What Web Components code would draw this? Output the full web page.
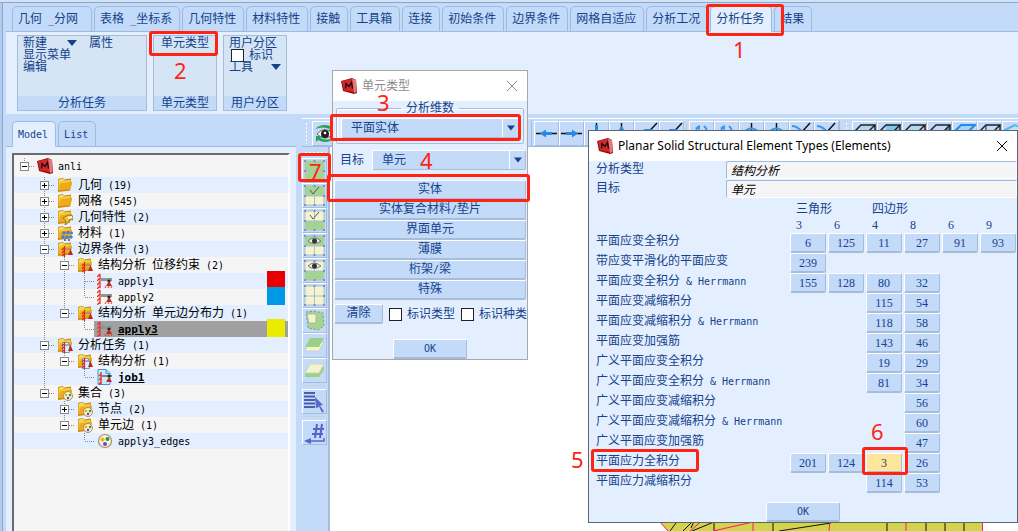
<!DOCTYPE html>
<html lang="zh-CN">
<head>
<meta charset="utf-8">
<title>anli</title>
<style>
  html, body { margin: 0; height: 100%; }
  body {
    --ink: #15428b;
    --bar: #c3daf9;
    --pane: #e3efff;
    --edge: #9bbbe3;
    --shade: #a6bcd8;
    --mark: #ff2314;
    --mono: "DejaVu Sans Mono", "Noto Sans CJK SC", monospace;
    font: 12px/16px "Liberation Serif", "Noto Sans CJK SC", sans-serif;
    color: var(--ink);
    background: var(--bar);
    overflow: hidden;
  }
</style>
</head>
<body>
<marc-app></marc-app>

<script>
// ---------- icons ----------
const folder = '<path d="M1 2l5-1 1 1.500 7-1v4l1 0-2 8-12 1.500z" fill="#c98a12"/><path d="M1.500 3l5-1 1 1.500 6-.8v8l-12 2z" fill="#f4cf3c"/><path d="M3 6.500l12-2-1.500 7.500-12 1.500z" fill="#f0a91c"/><path d="M2 3.500l4-1" stroke="#fff3a0"/>';
const support = '<path d="M7.500 5v11M5 9l2-2M5 12l2-2M5 15l2-2" stroke="#e02418" stroke-width="1.200"/><path d="M8 8h6" stroke="#8b9297" stroke-width="1.500"/><path d="M13.500 8l2.500 6h-5z" fill="#c3261c"/>';
const cubeTop = '<path d="M2 9l6-6h14l-6 6zM2 9v12M16 9v12h-14M22 3v12l-6 6" fill="none" stroke="#222" stroke-width="1.500"/>';
const mesh = (top, bottom) => `<rect x="2" y="2" width="19" height="10" fill="${top}"/><rect x="2" y="12" width="19" height="9" fill="${bottom}"/><path d="M2 2h19v19h-19zM11.500 2v19M2 12h19" fill="none" stroke="#a9c0d0"/><path d="M1 1h2v2h-2zM10.500 1h2v2h-2zM20 1h2v2h-2zM1 11h2v2h-2zM20 11h2v2h-2zM1 20h2v2h-2zM10.500 20h2v2h-2zM20 20h2v2h-2z" fill="#7f93bd"/>`;
const eye = '<path d="M5 7q6-6 13 0q-7 5-13 0z" fill="#eee" stroke="#777"/><circle cx="11.500" cy="7" r="2.500" fill="#333"/>';
const tick = '<path d="M7 6l3 4 6-7" fill="none" stroke="#555"/>';
const green = '#a3d58c', cream = '#f6f3cf';

const icons = {
  marc: [16, '<path d="M0 3l11-3 4 2 1 13-3 1-11-3z" fill="#9c1014"/><path d="M1 3l10-2 2 13-10-2z" fill="#d8272b"/><path d="M11 1l4 1 .5 12-2.500 1z" fill="#e8787a"/><path d="M4.500 10.500l.5-5 3 3 2.500-4 1 6" fill="none" stroke="#111" stroke-width="1.400"/>'],
  folder: [16, folder],
  prop: [16, folder + '<path d="M6 9l5-3 5 1v4l-3-1-2 4-3 2 1-4z" fill="#e8c53c" stroke="#8a6a14" stroke-width=".8"/><path d="M11 9l4-1" stroke="#fff" stroke-width="2"/>'],
  material: [16, folder + '<g fill="#3f7fd0"><circle cx="7" cy="8" r="1.700"/><circle cx="11" cy="7.500" r="1.700"/><circle cx="14.500" cy="8" r="1.500"/><circle cx="6" cy="12" r="1.700"/><circle cx="10" cy="12" r="1.700"/><circle cx="14" cy="12" r="1.700"/><circle cx="8" cy="15" r="1.200"/><circle cx="12" cy="15" r="1.200"/></g>'],
  bc: [16, folder + support],
  job: [16, folder + '<path d="M5.500 5.500h5l2 2v8h-7z" fill="#d9efff" stroke="#58a3d8"/>' + support],
  set: [16, folder + '<circle cx="11" cy="11" r="4.500" fill="#f5edd2" stroke="#ae8f57"/><circle cx="9" cy="10" r="1.200" fill="#d6b400"/><circle cx="13" cy="10" r="1.200" fill="#2c9a2c"/><circle cx="11" cy="13" r="1.200" fill="#6440c8"/>'],
  apply: [16, '<path d="M3 1v14M0 4l3-3M0 8l3-3M0 12l3-3M0 16l3-3" stroke="#e8362a" stroke-width="1.300"/><path d="M4 5h11v3h-11z" fill="#8d9599"/><circle cx="12" cy="8" r="1.600" fill="#222"/><path d="M12 8l3 5h-6z" fill="#c3261c"/><path d="M8 15l1-2M11 15l1-2M14 15l1-2" stroke="#e8362a"/>'],
  jobfile: [16, '<path d="M1 .5h8l4 4v11h-12z" fill="#cdeaff" stroke="#3f98d8"/><path d="M9 .5v4h4" fill="none" stroke="#3f98d8"/><path d="M4 3v13M2 7l2-2M2 11l2-2M2 15l2-2" stroke="#e8362a" stroke-width="1.500"/><path d="M5 7h10" stroke="#7f868a" stroke-width="2"/><circle cx="12" cy="7" r="1.500" fill="#222"/><path d="M12 8l3 5h-6z" fill="#c3261c"/>'],
  edges: [16, '<circle cx="8" cy="8" r="6.500" fill="#f7f2e0" stroke="#a59066" stroke-width="1.200"/><circle cx="5.500" cy="6.500" r="2" fill="#e2b90c"/><circle cx="10.500" cy="6" r="2" fill="#2b9a2f"/><circle cx="8" cy="11" r="2" fill="#6747d2"/>'],
  close: [10, '<path d="M0 0l10 10M10 0l-10 10" stroke="currentColor"/>'],
  down: [10, '<path d="M0 2h10l-5 6z" fill="currentColor"/>'],
  view: [23, '<path d="M4 12q8-9 16 0q-8 8-16 0z" fill="#fff" stroke="#666"/><circle cx="12" cy="12" r="4" fill="#222"/><circle cx="12" cy="11" r="1.300" fill="#fff"/><path d="M2 7q8-7 17-2l2-2v6h-6l2-2q-7-3-15 0z" fill="#2f9f57"/><path d="M22 16q-8 7-17 2l-2 2v-6h6l-2 2q7 3 15 0z" fill="#2f9f57"/>'],
  left: [23, '<path d="M1 11.500h21" stroke="#111" stroke-width="1.500"/><path d="M5 11.500l6-4v2.500h6v3h-6v2.500z" fill="#2788e6"/>'],
  right: [23, '<path d="M1 11.500h21" stroke="#111" stroke-width="1.500"/><path d="M18 11.500l-6-4v2.500h-6v3h6v2.500z" fill="#2788e6"/>'],
  vdown: [23, '<path d="M11.500 1v21" stroke="#111" stroke-width="1.500"/><path d="M10 3h3v8h-3z" fill="#2788e6"/>'],
  vup: [23, '<path d="M11.500 1v21" stroke="#111" stroke-width="1.500"/><path d="M11.500 4l4 6h-8z" fill="#2788e6"/>'],
  diag: [23, '<path d="M22 1l-19 20" stroke="#111" stroke-width="1.500"/><path d="M9 7l9 0-7 7z" fill="#2788e6"/>'],
  rotate: [23, '<path d="M9 4q-6 5 0 13M14 4q6 5 0 13" fill="none" stroke="#3f97ea" stroke-width="2"/><path d="M5 6l5-3v5z" fill="#3f97ea"/>'],
  spin: [23, '<path d="M11.500 1v21" stroke="#111" stroke-width="1.500"/><path d="M3 11q8-9 17 0" fill="none" stroke="#3f97ea" stroke-width="2"/>'],
  tilt: [23, '<path d="M20 1l-18 20" stroke="#111" stroke-width="1.500"/><path d="M2 4q6 0 13 9" fill="none" stroke="#3f97ea" stroke-width="2"/>'],
  cube: [23, '<path d="M2 9l6-6h14l-6 6z" fill="#acd9f5"/>' + cubeTop],
  cubeBack: [23, '<path d="M8 3h14v9h-14z" fill="#7fc6f0"/>' + cubeTop],
  cubeSide: [23, '<path d="M16 9l6-6v12l-6 6z" fill="#3fa6e6"/>' + cubeTop],
  cubeFront: [23, '<path d="M2 9l6-6h14l-6 6z" fill="#9fd6fb" stroke="#2788e6" stroke-width="2"/><path d="M2 9v12h14v-12" fill="none" stroke="#222"/>'],
  cubeWire: [23, cubeTop + '<path d="M8 3v12l-6 6" fill="none" stroke="#222"/>'],
  iso: [23, '<path d="M2 8l10-5 10 5-10 5z" fill="#bfe4fa" stroke="#55b5ef" stroke-width="2"/>'],
  meshAll: [23, mesh(green, green)],
  meshTickTop: [23, mesh(green, cream) + tick],
  meshTickBottom: [23, mesh(cream, green) + tick],
  meshEyeTop: [23, mesh(green, cream) + eye],
  meshEyeBottom: [23, mesh(cream, green) + eye],
  meshNone: [23, mesh(cream, cream)],
  meshPick: [23, '<path d="M3 3l8-1 9 2 1 13-6 4-10-2z" fill="#a3d58c" stroke="#7695a8" stroke-dasharray="2 2"/><path d="M4 5h9v9h-7z" fill="#f6f3cf" stroke="#aab9a5"/>'],
  sheetTop: [23, '<path d="M6 8l15 0-5 9h-14z" fill="#f6f3cf" stroke="#ccc"/><path d="M7 4h14l-5 9h-14z" fill="#9bd186"/>'],
  sheetBottom: [23, '<path d="M6 8h15v3l-5 7h-14v-3z" fill="#9bd186"/><path d="M7 5h14l-5 9h-14z" fill="#f4f3cd" stroke="#c8d8b4"/>'],
  list: [23, '<path d="M1 3h11M1 6.500h11M1 10h11M1 13.500h11M1 17h11" stroke="#4d5cae" stroke-width="2"/><path d="M12 7l8 8-3 .5 4 6-2 1-3-6-3 2z" fill="#5a66c8"/>'],
  hash: [23, '<path d="M14 3l-2 14M19 3l-2 14M10 8h11M9 13h11" stroke="#5663cf" stroke-width="2"/><path d="M21 17v3h-15" fill="none" stroke="#5663cf" stroke-width="1.500"/><path d="M1 20l7-3v6z" fill="#5663cf"/>']
};

const svg = (name) => {
  const [size, body] = icons[name];
  return `<svg width="${size}" height="${size}" viewBox="0 0 ${size} ${size}" fill="none" aria-hidden="true">${body}</svg>`;
};

// latin runs are set half as wide as the chinese glyphs
const mixed = (text) => text.replace(/[\x20-\x7e]+/g, (run) => `<span class="latin">${run.replace('&', '&amp;')}</span>`);

const base = `
  * { box-sizing: border-box; }
  svg { display: block; flex: none; }
  button, input, select { font: inherit; color: inherit; margin: 0; padding: 0; border: 0; background: none; border-radius: 0; }
  .latin { font: 10px/1 var(--mono); white-space: pre; }
`;

class Base extends HTMLElement {
  constructor() {
    super();
    this.attachShadow({ mode: 'open' });
  }
  connectedCallback() {
    this.shadowRoot.innerHTML = `<style>${base}${this.css()}</style>${this.html()}`;
  }
  attr(name) { return this.getAttribute(name) || ''; }
}

// ---------- small parts ----------
class PushButton extends Base {
  css() { return `
    :host { display: block; }
    button {
      display: block; width: 100%; height: 20px; line-height: 17px; text-align: center; white-space: nowrap;
      background: var(--face, var(--bar)); border: 1px solid; border-width: 1px 1px 2px 1px;
      border-color: #fff var(--shade) var(--shade) #fff; border-radius: 2px;
    }`; }
  html() { return `<button type="button">${mixed(this.attr('label'))}</button>`; }
}

class NumButton extends Base {
  css() { return `
    :host { display: block; }
    button {
      display: block; width: 100%; height: 20px; line-height: 16px; text-align: center;
      background: var(--face, var(--bar)); border: 1px solid; border-width: 1px 1px 2px 1px;
      border-color: #fff var(--shade) var(--shade) #fff; border-radius: 2px;
    }`; }
  html() { return `<button type="button">${this.attr('label')}</button>`; }
}

class CheckBox extends Base {
  css() { return `
    :host { display: block; }
    label { display: flex; align-items: center; gap: 5px; white-space: nowrap; line-height: var(--row, 16px); height: var(--row, 16px); }
    input { appearance: none; width: 13px; height: 13px; background: #fff; border: 1px solid #222; flex: none; }`; }
  html() { return `<label><input type="checkbox">${this.attr('label')}</label>`; }
}

class DropDown extends Base {
  css() { return `
    :host { display: block; flex: 1; }
    .box { display: flex; height: 20px; background: var(--bar); border: 1px solid; border-color: #fff var(--shade) var(--shade) #fff; border-radius: 2px; }
    select { appearance: none; flex: 1; min-width: 0; padding-left: 9px; outline: 0; }
    .arrow { display: grid; place-items: center; width: 16px; border-left: 1px solid #fff; pointer-events: none; }
    svg { width: 8px; height: 8px; }`; }
  html() { return `<div class="box"><select aria-label="${this.attr('name')}"><option>${this.attr('value')}</option></select><span class="arrow">${svg('down')}</span></div>`; }
}

class ToolButton extends Base {
  css() { return `
    :host { display: block; flex: none; }
    button { display: block; width: 25px; height: 25px; background: var(--bar); border: 1px solid; border-color: #fff var(--shade) var(--shade) #fff; }`; }
  html() { return `<button type="button" aria-label="${this.attr('icon')}">${svg(this.attr('icon'))}</button>`; }
}

class TabStrip extends Base {
  css() { return `
    :host { display: block; }
    nav { display: flex; gap: 2px; height: 26px; padding-left: 6px; border-bottom: 1px solid var(--edge); }
    button {
      height: 26px; padding: 0 7px 0 5px; white-space: pre; line-height: 24px;
      border: 1px solid var(--edge); border-radius: 5px 5px 0 0; background: var(--bar); flex: none;
    }
    button.on { background: var(--pane); border-bottom-color: var(--pane); }`; }
  html() {
    const on = this.attr('current');
    return `<nav>${this.attr('tabs').split('|').map((t) =>
      `<button type="button" class="${t === on ? 'on' : ''}">${mixed(t)}</button>`).join('')}</nav>`;
  }
}

class RibbonGroup extends Base {
  css() { return `
    :host { display: flex; flex-direction: column; height: 76px; background: #d5e5f5; border: 1px solid var(--shade); }
    .body { flex: 1; padding: 1px 5px; }
    footer { height: 14px; line-height: 14px; text-align: center; background: var(--bar); }`; }
  html() { return `<div class="body"><slot></slot></div><footer>${this.attr('label')}</footer>`; }
}

class RibbonItem extends Base {
  css() { return `
    :host { display: block; }
    button { display: flex; align-items: center; justify-content: space-between; width: 100%; height: 12px; line-height: 12px; white-space: nowrap; }`; }
  html() { return `<button type="button">${this.attr('label')}${this.hasAttribute('menu') ? svg('down') : ''}</button>`; }
}

// ---------- ribbon ----------
class RibbonBar extends Base {
  css() { return `
    :host { display: block; padding-top: 3px; }
    .groups { display: flex; gap: 6px; height: 82px; padding: 3px 11px; background: var(--pane); }
    .one { width: 130px; } .two { width: 64px; } .three { width: 64px; }
    .line { display: flex; gap: 12px; }
    .line ribbon-item:first-child { width: 54px; }
    .center { width: 48px; margin: 0 auto; }
    check-box { --row: 12px; margin-left: 2px; }`; }
  html() { return `
    <tab-strip current="分析任务" tabs="几何 _分网 |表格 _坐标系|几何特性|材料特性|接触|工具箱|连接|初始条件|边界条件|网格自适应|分析工况|分析任务|结果"></tab-strip>
    <div class="groups">
      <ribbon-group class="one" label="分析任务">
        <div class="line"><ribbon-item label="新建" menu></ribbon-item><ribbon-item label="属性"></ribbon-item></div>
        <ribbon-item label="显示菜单"></ribbon-item>
        <ribbon-item label="编辑"></ribbon-item>
      </ribbon-group>
      <ribbon-group class="two" label="单元类型">
        <ribbon-item class="center" label="单元类型"></ribbon-item>
      </ribbon-group>
      <ribbon-group class="three" label="用户分区">
        <ribbon-item label="用户分区"></ribbon-item>
        <check-box label="标识"></check-box>
        <ribbon-item label="工具" menu></ribbon-item>
      </ribbon-group>
    </div>`; }
}

// ---------- model tree ----------
// guides, one letter for each level: p/m box with a line below it, P/M last box,
// l line, t leaf, e last leaf, . nothing
const rows = [
  ['M', 'marc', 'anli'],
  ['.p', 'folder', '几何 (19)'],
  ['.p', 'folder', '网格 (545)'],
  ['.p', 'prop', '几何特性 (2)'],
  ['.p', 'material', '材料 (1)'],
  ['.m', 'bc', '边界条件 (3)'],
  ['.lm', 'bc', '结构分析 位移约束 (2)'],
  ['.llt', 'apply', 'apply1', '#e60000'],
  ['.lle', 'apply', 'apply2', '#0099e6'],
  ['.lM', 'bc', '结构分析 单元边分布力 (1)'],
  ['.l.e', 'apply', 'apply3', '#ebeb00', 'bold selected'],
  ['.m', 'job', '分析任务 (1)'],
  ['.lM', 'job', '结构分析 (1)'],
  ['.l.e', 'jobfile', 'job1', '', 'bold'],
  ['.M', 'set', '集合 (3)'],
  ['..p', 'set', '节点 (2)'],
  ['..M', 'set', '单元边 (1)'],
  ['...e', 'edges', 'apply3_edges']
];

class TreeRow extends Base {
  guide(g) {
    const dots = (d) => `<path d="${d}" stroke="#888" stroke-dasharray="1 1"/>`;
    let s = '';
    if (/[pmlt]/.test(g)) s += dots('M10.500 0v16');
    if (/[PMe]/.test(g)) s += dots('M10.500 0v8');
    if (/[pmPMte]/.test(g)) s += dots('M11 8.500h9');
    if (/[pm]/i.test(g)) s += '<rect x="6.500" y="4.500" width="8" height="8" fill="#fff" stroke="#888"/><path d="M8 8.500h5" stroke="#000"/>';
    if (/p/i.test(g)) s += '<path d="M10.500 6v5" stroke="#000"/>';
    return `<svg width="20" height="16" viewBox="0 0 20 16">${s}</svg>`;
  }
  css() { return `
    :host { display: flex; align-items: center; height: 16px; color: #000; }
    :host(:nth-child(even)) { background: var(--pane); }
    :host(:first-child) { height: 22px; }
    .node { display: flex; align-items: center; gap: 5px; flex: 1; height: 16px; padding-left: 3px; white-space: nowrap; }
    .swatch { width: 18px; height: 18px; margin: 0 3px 0 auto; align-self: flex-end; }
    :host(.bold) .latin { font-weight: bold; font-size: 11px; text-decoration: underline; }
    :host(.selected) .node { background: #a0a0a0; }`; }
  html() {
    const color = this.attr('color');
    return [...this.attr('guides')].map((g) => this.guide(g)).join('') +
      `<div class="node">${svg(this.attr('icon'))}<span>${mixed(this.attr('label'))}</span>${color ? `<i class="swatch" style="background:${color}"></i>` : ''}</div>`;
  }
}

class ModelPanel extends Base {
  css() { return `
    :host { display: flex; flex-direction: column; width: 290px; padding-top: 7px; }
    .pane { flex: 1; padding: 6px 6px 0; background: var(--pane); min-height: 0; }
    .tree { height: 100%; background: #f5f5f5; border: 2px solid; border-color: #6b6b6b #fff transparent #6b6b6b; border-bottom: 0; overflow: hidden; }`; }
  html() { return `
    <tab-strip current="Model" tabs="Model|List"></tab-strip>
    <div class="pane"><div class="tree">${rows.map(([g, icon, label, color = '', cls = '']) =>
      `<tree-row class="${cls}" guides="${g}" icon="${icon}" label="${label}" color="${color}"></tree-row>`).join('')}</div></div>`; }
}

// ---------- viewport ----------
const tools = (names) => names.split(' ').map((n) => n === '-' ? '<hr>' : `<tool-button icon="${n}"></tool-button>`).join('');

class ViewPort extends Base {
  css() { return `
    :host { display: grid; grid-template: 29px 1fr / 28px 1fr; flex: 1; min-width: 0; padding-top: 4px; }
    .top { grid-column: 1 / 3; display: flex; gap: 0; padding-top: 1px; border-top: 1px solid #fff; border-bottom: 1px solid var(--edge); overflow: hidden; }
    .set { display: flex; align-items: center; flex: none; }
    .first { width: 230px; border-right: 1px solid var(--shade); margin-right: 2px; }
    .mid { border-right: 1px solid var(--shade); margin-right: 2px; }
    .grip { width: 3px; height: 22px; margin: 0 4px 0 3px; background: radial-gradient(#fff 1px, transparent 1px) 0 0 / 3px 4px; }
    hr { border: 0; margin: 0 2px; width: 1px; height: 18px; background: #b6c4d6; }
    .side { display: flex; flex-direction: column; border-right: 2px solid var(--shade); }
    .side .grip { width: 22px; height: 4px; margin: 4px 2px 3px; background-size: 4px 4px; }
    .side hr { width: 20px; height: 1px; margin: 2px 3px 3px; background: #cbd0d8; }
    .canvas { position: relative; background: #fff; overflow: hidden; }
    .canvas svg { position: absolute; left: 330px; bottom: 0; }`; }
  html() { return `
    <div class="top">
      <div class="set first"><span class="grip"></span>${tools('view')}</div>
      <div class="set mid">${tools('left right vdown vup diag diag - rotate rotate spin spin tilt tilt')}</div>
      <div class="set"><span class="grip"></span>${tools('cube cubeBack cube cubeSide cubeFront cubeWire iso')}</div>
    </div>
    <div class="side"><span class="grip"></span>${tools('meshAll meshTickTop meshTickBottom meshEyeTop meshEyeBottom meshNone meshPick sheetTop sheetBottom - list - hash')}</div>
    <div class="canvas">
      <svg width="345" height="12" viewBox="660 519 345 12">
        <path d="M657 519h326v12h-315z" fill="#d4d44a"/>
        <path d="M679 519l-9 12M695 519l-12 12M714 519v12M773 519v12M887 519v12M926 519v12M945 519v12M964 519v12M692 531l22-9M779 531l52-8M691 528l4-9M1003 522h2" stroke="#111"/>
        <path d="M660 522l8 9M704 519l-14 12M713 531l40-9M753 519v12M830 519l-1 12M906 519v12M982.500 519v12" stroke="#ff1478"/>
      </svg>
    </div>`; }
}

// ---------- dialogs ----------
class DialogWindow extends Base {
  css() { return `
    :host { display: flex; flex-direction: column; background: var(--pane); border: 1px solid var(--frame, #a8a8a8); }
    header { display: flex; align-items: center; height: 30px; padding: 0 10px 0 8px; gap: 5px; background: #fff; }
    h1 { flex: 1; margin: 0; font: inherit; font-size: var(--title, 12px); white-space: nowrap; }
    header button { display: grid; place-items: center; width: 10px; height: 16px; }`; }
  html() { return `
    <header>${svg('marc')}<h1>${this.attr('label')}</h1><button type="button" aria-label="close">${svg('close')}</button></header>
    <slot></slot>`; }
}

class ElementTypeDialog extends Base {
  css() { return `
    :host { display: block; width: 196px; }
    dialog-window { height: 290px; color: #8c8c8c; }
    .body { display: flex; flex-direction: column; flex: 1; color: var(--ink); padding: 0 1px; }
    fieldset { margin: 0 2px; padding: 3px 4px 5px 4px; border: 1px solid var(--shade); border-radius: 2px; box-shadow: inset 1px 1px #fff; }
    legend { margin: 0 auto; padding: 0 5px; line-height: 14px; height: 14px; }
    .target { display: flex; align-items: center; gap: 8px; padding: 6px 0 10px 6px; }
    .clear { display: flex; align-items: center; gap: 6px; padding-top: 4px; }
    .clear push-button { width: 49px; flex: none; }
    .ok { width: 74px; margin: auto auto 0; }`; }
  html() { return `
    <dialog-window label="单元类型">
      <div class="body">
        <fieldset><legend>分析维数</legend><drop-down name="分析维数" value="平面实体"></drop-down></fieldset>
        <div class="target"><span>目标</span><drop-down name="目标" value="单元"></drop-down></div>
        ${['实体', '实体复合材料/垫片', '界面单元', '薄膜', '桁架/梁', '特殊'].map((t) => `<push-button label="${t}"></push-button>`).join('')}
        <div class="clear"><push-button label="清除"></push-button><check-box label="标识类型"></check-box><check-box label="标识种类"></check-box></div>
        <push-button class="ok" label="OK"></push-button>
      </div>
    </dialog-window>`; }
}

const planar = [
  ['平面应变全积分', 6, 125, 11, 27, 91, 93],
  ['带应变平滑化的平面应变', 239],
  ['平面应变全积分 & Herrmann', 155, 128, 80, 32],
  ['平面应变减缩积分', 0, 0, 115, 54],
  ['平面应变减缩积分 & Herrmann', 0, 0, 118, 58],
  ['平面应变加强筋', 0, 0, 143, 46],
  ['广义平面应变全积分', 0, 0, 19, 29],
  ['广义平面应变全积分 & Herrmann', 0, 0, 81, 34],
  ['广义平面应变减缩积分', 0, 0, 0, 56],
  ['广义平面应变减缩积分 & Herrmann', 0, 0, 0, 60],
  ['广义平面应变加强筋', 0, 0, 0, 47],
  ['平面应力全积分', 201, 124, 3, 26],
  ['平面应力减缩积分', 0, 0, 114, 53]
];

class PlanarDialog extends Base {
  css() { return `
    :host { display: block; width: 430px; }
    dialog-window { --frame: #5c6670; --title: 12px; color: #000; font-family: "Noto Sans", "Noto Sans CJK SC", sans-serif; height: 393px; }
    .body { display: flex; flex-direction: column; flex: 1; color: var(--ink); font-family: "Liberation Serif", "Noto Sans CJK SC", sans-serif; }
    .field { display: grid; grid-template-columns: 130px 1fr; height: 19px; padding-left: 7px; }
    input { height: 18px; padding-left: 4px; background: #f5f5f5; border: 1px solid; border-color: var(--edge) #fff #fff var(--edge); color: #000; font-style: italic; min-width: 0; border-radius: 2px; }
    table { width: 100%; table-layout: fixed; border-collapse: collapse; margin-top: 2px; }
    th, td { padding: 0; height: 20px; }
    td { padding: 0 1px; }
    th { font-weight: normal; text-align: left; vertical-align: top; padding-left: 7px; line-height: 16px; white-space: nowrap; }
    thead th { height: 16px; }
    col.name { width: 200px; }
    .picked { --face: #ffe599; }
    .ok { width: 74px; margin: auto auto 0; }`; }
  html() { return `
    <dialog-window label="Planar Solid Structural Element Types (Elements)">
      <div class="body">
        <div class="field"><label for="kind">分析类型</label><input id="kind" value="结构分析" readonly></div>
        <div class="field"><label for="target">目标</label><input id="target" value="单元" readonly></div>
        <table>
          <colgroup><col class="name"><col span="6"></colgroup>
          <thead>
            <tr><th></th><th colspan="2">三角形</th><th colspan="4">四边形</th></tr>
            <tr><th></th>${[3, 6, 4, 8, 6, 9].map((n) => `<th>${n}</th>`).join('')}</tr>
          </thead>
          <tbody>${planar.map(([name, ...ids]) => `
            <tr><th>${mixed(name)}</th>${[0, 1, 2, 3, 4, 5].map((i) =>
              `<td>${ids[i] ? `<num-button class="${ids[i] === 3 ? 'picked' : ''}" label="${ids[i]}"></num-button>` : ''}</td>`).join('')}</tr>`).join('')}
          </tbody>
        </table>
        <push-button class="ok" label="OK"></push-button>
      </div>
    </dialog-window>`; }
}

// ---------- step marks laid over the windows ----------
const frames = [[706, 4, 78, 32], [149, 31, 69, 25], [330, 114, 191, 27], [327, 174, 203, 28], [298, 153, 33, 29], [591, 449, 108, 23], [862, 447, 46, 28]];
const steps = [[1, 733, 40], [2, 174, 61], [3, 377, 93], [4, 420, 151], [5, 571, 450], [6, 871, 422], [7, 309, 162]];

class StepMarks extends Base {
  css() { return `
    :host { position: absolute; inset: 0; pointer-events: none; color: var(--mark); font: 22px/18px "Noto Sans", sans-serif; }
    div, span { position: absolute; }
    div { border: 3px solid var(--mark); border-radius: 3px; }`; }
  html() {
    return frames.map(([x, y, w, h]) => `<div style="left:${x}px;top:${y}px;width:${w}px;height:${h}px"></div>`).join('') +
      steps.map(([n, x, y]) => `<span style="left:${x}px;top:${y}px">${n}</span>`).join('');
  }
}

class MarcApp extends Base {
  css() { return `
    :host { display: flex; flex-direction: column; position: relative; height: 100vh; overflow: hidden; background: var(--bar); }
    .strip { height: 3px; flex: none; background: #d3e2f6; border-bottom: 1px solid #8ea6c6; }
    .frame { display: flex; flex: 1; min-height: 0; }
    .rail { width: 3px; margin-right: 3px; background: #b2cbee; border-right: 1px solid #8ea6c6; flex: none; }
    .main { display: flex; flex-direction: column; flex: 1; min-width: 0; }
    .work { display: flex; flex: 1; min-height: 0; gap: 6px; }
    element-type-dialog, planar-dialog { position: absolute; }
    element-type-dialog { left: 332px; top: 70px; }
    planar-dialog { left: 588px; top: 130px; }`; }
  html() { return `
    <div class="strip"></div>
    <div class="frame">
      <div class="rail"></div>
      <div class="main">
        <ribbon-bar></ribbon-bar>
        <div class="work"><model-panel></model-panel><view-port></view-port></div>
      </div>
    </div>
    <element-type-dialog></element-type-dialog>
    <planar-dialog></planar-dialog>
    <step-marks></step-marks>`; }
}

customElements.define('push-button', PushButton);
customElements.define('num-button', NumButton);
customElements.define('check-box', CheckBox);
customElements.define('drop-down', DropDown);
customElements.define('tool-button', ToolButton);
customElements.define('tab-strip', TabStrip);
customElements.define('ribbon-group', RibbonGroup);
customElements.define('ribbon-item', RibbonItem);
customElements.define('ribbon-bar', RibbonBar);
customElements.define('tree-row', TreeRow);
customElements.define('model-panel', ModelPanel);
customElements.define('view-port', ViewPort);
customElements.define('dialog-window', DialogWindow);
customElements.define('element-type-dialog', ElementTypeDialog);
customElements.define('planar-dialog', PlanarDialog);
customElements.define('step-marks', StepMarks);
customElements.define('marc-app', MarcApp);
</script>
</body>
</html>
